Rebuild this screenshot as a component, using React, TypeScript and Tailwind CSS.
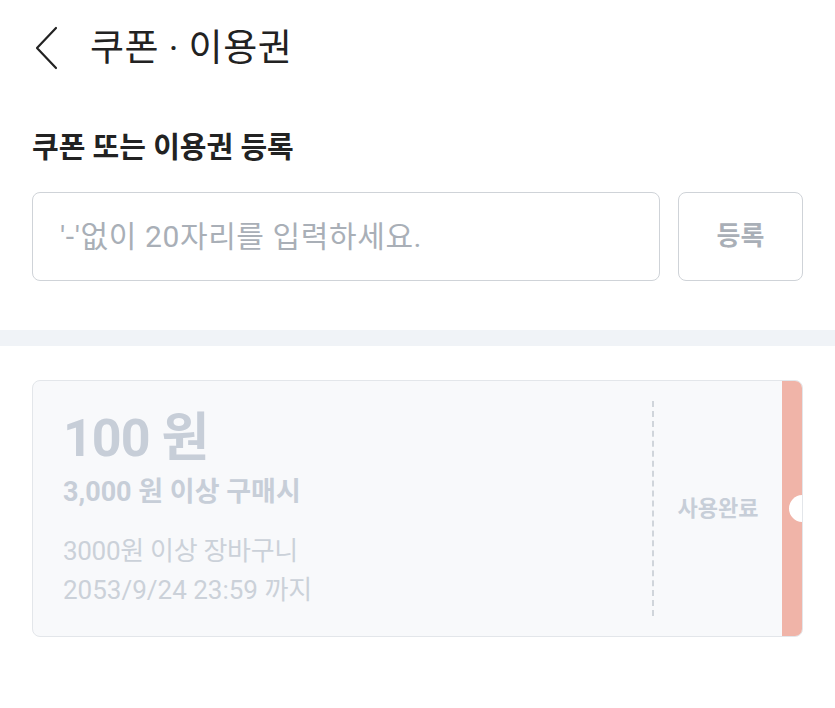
import React from "react";

const font = { fontFamily: 'Roboto, "Noto Sans CJK KR", sans-serif' };

function BackIcon() {
  return (
    <svg width="26" height="44" viewBox="0 0 26 44" fill="none">
      <path d="M22 2 L3 22 L22 42" stroke="#222222" strokeWidth="2.2" strokeLinecap="round" strokeLinejoin="round" />
    </svg>
  );
}

function CouponCard() {
  return (
    <div className="relative flex h-[257px] rounded-lg border border-[#e3e6ea] bg-[#f8f9fb] overflow-hidden">
      <div className="flex-1 pl-[30px] pt-[26px]">
        <p className="text-[52px] font-bold leading-[64px] tracking-[-1px] text-[#c7ced8]">100 원</p>
        <p className="mt-[3px] text-[27px] font-bold leading-[36px] text-[#c7ced8]">3,000 원 이상 구매시</p>
        <p className="mt-[22px] text-[26px] leading-[39px] tracking-[-0.3px] text-[#cbd1d9]">3000원 이상 장바구니</p>
        <p className="text-[26px] leading-[39px] text-[#cbd1d9]">2053/9/24 23:59 까지</p>
      </div>
      <div className="my-[20px] border-l-2 border-dashed border-[#d0d5db]" />
      <div className="flex w-[128px] items-center justify-center">
        <span className="text-[22px] font-bold text-[#c7ced8]">사용완료</span>
      </div>
      <div className="w-[20px] bg-[#f0b4a8]" />
      <div className="absolute right-[-14px] top-[114px] h-[27px] w-[27px] rounded-full bg-white" />
    </div>
  );
}

export default function App() {
  return (
    <div className="min-h-screen bg-white" style={font}>
      <div className="flex h-[96px] items-center pl-[34px]">
        <BackIcon />
        <h1 className="ml-[30px] text-[37px] font-normal leading-none tracking-[0.5px] text-[#222222]">쿠폰 · 이용권</h1>
      </div>

      <div className="px-[32px]">
        <h2 className="mt-[34px] text-[29px] font-bold leading-[36px] text-[#222222]">
          쿠폰 또는 이용권 등록
        </h2>
        <div className="mt-[26px] flex gap-[18px]">
          <input
            className="h-[89px] flex-1 rounded-lg border border-[#cfd3d8] bg-white px-[27px] text-[30px] tracking-[0.6px] text-[#222] outline-none placeholder:text-[#a9afb7]"
            style={font}
            placeholder="'-'없이 20자리를 입력하세요."
          />
          <button className="h-[89px] w-[125px] rounded-lg border border-[#cfd3d8] bg-white text-[26px] font-bold text-[#a9afb7]">
            등록
          </button>
        </div>
      </div>

      <div className="mt-[49px] h-[16px] bg-[#f0f3f7]" />

      <div className="px-[32px] pt-[34px]">
        <CouponCard />
      </div>
    </div>
  );
}
